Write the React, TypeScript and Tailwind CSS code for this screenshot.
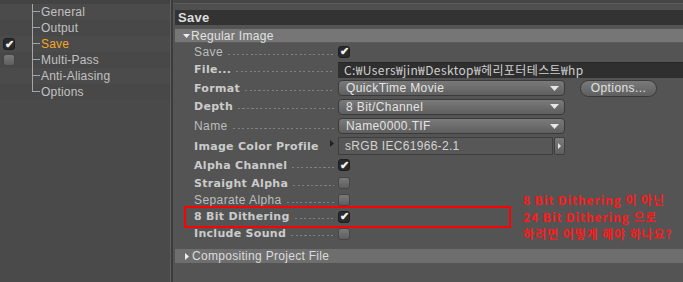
import React from "react";

const treeItems = [
  { name: "General", check: null },
  { name: "Output", check: null },
  { name: "Save", check: true, active: true },
  { name: "Multi-Pass", check: false },
  { name: "Anti-Aliasing", check: null },
  { name: "Options", check: null },
];

const Check = ({ on }: { on: boolean }) =>
  on ? (
    <div className="w-[12px] h-[12px] rounded-[3px] bg-[#2a2a2a] border border-[#1e1e1e] flex items-center justify-center text-[11px] leading-none text-[#f0f0f0] font-bold">
      ✔
    </div>
  ) : (
    <div className="w-[12px] h-[12px] rounded-[3px] bg-gradient-to-b from-[#7a7a7a] to-[#5e5e5e] border border-[#454545]" />
  );

const Arrow = () => (
  <svg width="9" height="5" viewBox="0 0 9 5" className="shrink-0">
    <path d="M0 0H9L4.5 5Z" fill="#e6e6e6" />
  </svg>
);

const Dropdown = ({ text }: { text: string }) => (
  <div className="w-[227px] h-[16px] rounded-[4px] border border-[#3a3a3a] bg-gradient-to-b from-[#7a7a7a] to-[#5f5f5f] flex items-center pl-[7px] pr-[5px] text-[#e4e4e4] tracking-[0.4px]">
    <span className="flex-1">{text}</span>
    <Arrow />
  </div>
);

const Leader = () => (
  <div className="flex-1 h-px mb-[3px] ml-[5px] bg-[repeating-linear-gradient(to_right,#808080_0_2px,transparent_2px_4.5px)]" />
);

type RowProps = {
  label: string;
  bold?: boolean;
  h: number;
  leader?: boolean;
  children?: React.ReactNode;
};

const Row = ({ label, bold, h, leader = true, children }: RowProps) => (
  <div className="flex items-center pl-[19px]" style={{ height: h }}>
    <div className="w-[140px] flex items-end shrink-0">
      {bold ? (
        <span
          className="font-bold text-[11px] text-[#cbcbcb] tracking-[0.3px] whitespace-nowrap"
          style={{ fontFamily: '"DejaVu Sans", sans-serif' }}
        >
          {label}
        </span>
      ) : (
        <span className="text-[#bdbdbd] tracking-[0.4px] whitespace-nowrap">{label}</span>
      )}
      {leader ? <Leader /> : <div className="flex-1" />}
    </div>
    <div className="ml-[4px] flex items-center flex-1">{children}</div>
  </div>
);

export default function App() {
  return (
    <div
      className="w-[683px] h-[282px] flex bg-[#545454] text-[12px] leading-none overflow-hidden relative"
      style={{ fontFamily: '"Liberation Sans", "Noto Sans CJK KR", sans-serif' }}
    >
      {/* left tree */}
      <div className="w-[170px] shrink-0 bg-[#4a4a4a] flex flex-col">
        <div className="h-[4px] bg-[#434343]" />
        {treeItems.map((it, i) => (
          <div
            key={it.name}
            className={
              "h-[16px] flex items-center " +
              (i % 2 === 0 ? "bg-[#4b4b4b]" : "bg-[#484848]")
            }
          >
            <div className="w-[32px] pl-[3px] flex items-center">
              {it.check !== null && <Check on={!!it.check} />}
            </div>
            <div className="w-[8px] h-full flex flex-col">
              <div className="h-1/2 border-l border-b border-[#a5a5a5]" />
              <div
                className={
                  "h-1/2 " + (i < treeItems.length - 1 ? "border-l border-[#a5a5a5]" : "")
                }
              />
            </div>
            <span
              className={
                "ml-[1px] tracking-[0.2px] " +
                (it.active ? "text-[#f5a623]" : "text-[#c2c2c2]")
              }
            >
              {it.name}
            </span>
          </div>
        ))}
      </div>

      {/* divider */}
      <div className="w-px bg-[#5e5e5e]" />
      <div className="w-[2px] bg-[#3c3c3c]" />

      {/* right panel */}
      <div className="flex-1 flex flex-col pl-[2px]">
        <div className="h-[3px] bg-[#464646] -ml-[2px]" />
        <div className="h-px bg-[#5c5c5c] -ml-[2px]" />
        <div className="h-[6px] bg-[#4f4f4f] -ml-[2px]" />
        <div className="h-[15px] bg-[#333333] flex items-center pl-[3px] font-bold text-[13px] text-[#dedede] tracking-[0.3px]">
          Save
        </div>
        <div className="h-[4px]" />
        <div className="h-[14px] bg-[#767676] flex items-center pl-[8px] text-[#e2e2e2] border-b border-[#5a5a5a]">
          <svg width="7" height="4" viewBox="0 0 7 4" className="mr-[1px]">
            <path d="M0 0H7L3.5 4Z" fill="#ededed" />
          </svg>
          <span className="tracking-[0.3px]">Regular Image</span>
        </div>

        <Row label="Save" h={17}>
          <Check on />
        </Row>
        <Row label="File..." bold h={19}>
          <div
            className="flex-1 h-[16px] bg-[#2f2f2f] border-t border-[#262626] flex items-center pl-[6px] text-[#cfcfcf] whitespace-nowrap tracking-[0.4px]"
            style={{ fontFamily: '"Noto Sans CJK KR", "Liberation Sans", sans-serif', fontSize: 12 }}
          >
            C:₩Users₩jin₩Desktop₩헤리포터테스트₩hp
          </div>
        </Row>
        <Row label="Format" bold h={18}>
          <Dropdown text="QuickTime Movie" />
          <div className="ml-[15px] w-[77px] h-[17px] rounded-full border border-[#3a3a3a] bg-gradient-to-b from-[#7a7a7a] to-[#5f5f5f] flex items-center justify-center text-[#e2e2e2] tracking-[0.4px]">
            Options...
          </div>
        </Row>
        <Row label="Depth" bold h={19}>
          <Dropdown text="8 Bit/Channel" />
        </Row>
        <Row label="Name" h={20}>
          <Dropdown text="Name0000.TIF" />
        </Row>
        <Row label="Image Color Profile" bold h={20} leader={false}>
          <div className="flex items-center -ml-[8px]">
            <svg width="4" height="7" viewBox="0 0 4 7" className="mr-[4px] -mt-[5px]">
              <path d="M0 0L4 3.5L0 7Z" fill="#222222" />
            </svg>
            <div className="w-[215px] h-[18px] bg-[#575757] border border-[#3e3e3e] flex items-center pl-[6px] text-[#d2d2d2] tracking-[0.3px]">
              sRGB IEC61966-2.1
            </div>
            <div className="ml-px w-[11px] h-[18px] rounded-[2px] border border-[#3e3e3e] bg-gradient-to-b from-[#7a7a7a] to-[#5f5f5f] flex items-center justify-center">
              <svg width="3" height="6" viewBox="0 0 3 6">
                <path d="M0 0L3 3L0 6Z" fill="#e6e6e6" />
              </svg>
            </div>
          </div>
        </Row>
        <Row label="Alpha Channel" bold h={18}>
          <Check on />
        </Row>
        <Row label="Straight Alpha" bold h={18}>
          <Check on={false} />
        </Row>
        <Row label="Separate Alpha" h={16}>
          <Check on={false} />
        </Row>
        <Row label="8 Bit Dithering" bold h={17}>
          <Check on />
        </Row>
        <Row label="Include Sound" bold h={17}>
          <Check on={false} />
        </Row>

        <div className="h-[7px]" />
        <div className="h-[14px] bg-[#6e6e6e] flex items-center pl-[10px] text-[#dcdcdc]">
          <svg width="4" height="7" viewBox="0 0 4 7" className="mr-[3px]">
            <path d="M0 0L4 3.5L0 7Z" fill="#ededed" />
          </svg>
          <span className="tracking-[0.3px]">Compositing Project File</span>
        </div>
      </div>

      {/* red annotation */}
      <div className="absolute left-[184px] top-[206px] w-[327px] h-[22px] border-2 border-[#ff0000]" />
      <div
        className="absolute left-[523px] top-[193px] flex flex-col gap-[4px] text-[#ff1a1a] font-bold text-[12px] leading-[13px] tracking-[0.9px] whitespace-nowrap"
        style={{ fontFamily: '"Noto Sans CJK KR", "Liberation Sans", sans-serif' }}
      >
        <div>8 Bit Dithering 이 아닌</div>
        <div>24 Bit Dithering 으로</div>
        <div>하려면 어떻게 해야 하나요?</div>
      </div>
    </div>
  );
}
